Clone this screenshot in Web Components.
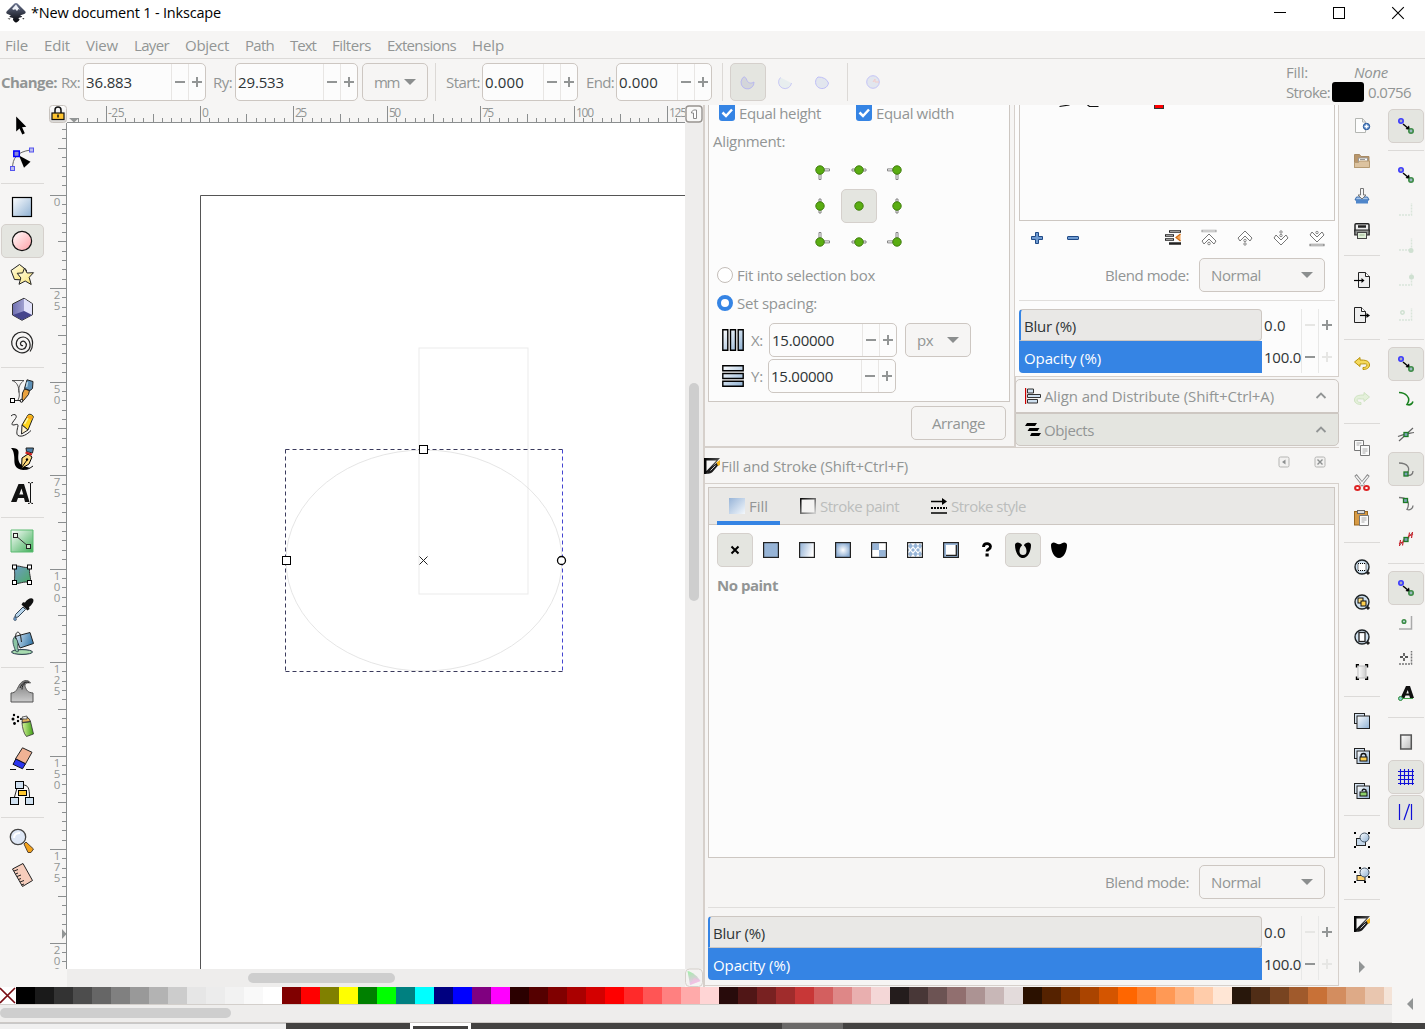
<!DOCTYPE html>
<html lang="en">
<head>
<meta charset="utf-8">
<title>*New document 1 - Inkscape</title>
<style>
html,body{margin:0;height:100%;overflow:hidden}
body{width:1425px;height:1029px;background:#f6f5f4;font:15px/20px "Open Sans","Noto Sans",sans-serif;color:#929595}
</style>
</head>
<body>
<ink-app></ink-app>
<script>
const FONT = '"Open Sans","Noto Sans",sans-serif';
const lg = (id, a, b, x2 = 1, y2 = 1) => `<linearGradient id="${id}" x1="0" y1="0" x2="${x2}" y2="${y2}"><stop offset="0" stop-color="${a}"/><stop offset="1" stop-color="${b}"/></linearGradient>`;
const BLUE = lg('g', '#fdfeff', '#8fb1d3');
const snapPair = '<circle cx="3" cy="3" r="2.2" fill="#aab" stroke="#3a3aff" stroke-width="1.6"/><path d="M5 6l6 5" stroke="#000" stroke-width="1.4"/><path d="M12 12l-4.500-1 3.500-3.500z" fill="#000"/><circle cx="13" cy="13" r="2.200" fill="#9bb7c0" stroke="#3d8b46" stroke-width="1.600"/>';
const node = (x, y) => `<rect x="${x - 2}" y="${y - 2}" width="4" height="4" fill="#7aa0b8" stroke="#1d7a26" stroke-width="1.300"/>`;
const corner = '<path d="M1 13h12.500V1" fill="none" stroke="#d9e5da" stroke-width="1.500" stroke-dasharray="2 1"/>';
const lens = '<path d="M12 12l3 3" stroke="#222" stroke-width="3"/><circle cx="8" cy="8" r="7" fill="#cfe0ee" stroke="#1c2124" stroke-width="1.400"/>';
const sheets = '<rect x=".5" y=".5" width="10" height="10" fill="#d6e4f2" stroke="#222"/><rect x="3" y="3" width="12.500" height="12.500" fill="url(#g)" stroke="#222"/>';
const hd = (x, y) => `<rect x="${x}" y="${y}" width="2" height="2" fill="#000"/>`;
const dot = '<circle cx="12" cy="12" r="4.200" fill="#5aad12" stroke="#3f7d0c"/>';
const arm = { r:'<path d="M16 10.900h5.500v2H16z"/>', l:'<path d="M2.500 10.900H8v2H2.500z"/>', b:'<path d="M11 16h2v5.500h-2z"/>', t:'<path d="M11 2.500h2V8h-2z"/>',
  rs:'<path d="M16 11h3v2h-3z"/>', ls:'<path d="M5 11h3v2H5z"/>', bs:'<path d="M11 16h2v3h-2z"/>', ts:'<path d="M11 5h2v3h-2z"/>' };
const arms = s => `<g fill="#fff" stroke="#777" stroke-width=".9">${s.split(' ').map(k => arm[k] || '').join('')}</g>${dot}`;
const box = (inner, fill) => `<rect x=".6" y=".6" width="14.800" height="14.800" fill="${fill}"/>${inner}<rect x=".6" y=".6" width="14.800" height="14.800" fill="none" stroke="#222" stroke-width="1.200"/>`;

const ICONS = {
 logo:[20,`${lg('g','#6b7490','#05060a',0,1)}<path d="M10 0c1 0 2 .8 3 2l6 6c1.500 1.600.4 2.800-1.500 3.200l-3 1c-1 .5 2 .8 1.500 1.600-.7.9-3.200.5-3.500 1.400s1.600.7 1 1.600c-.8 1.300-2.200 2.700-3.500 2.700s-2.300-1.300-3-2.400c-.5-1 .8-1.600 0-2.200-1-.6-3-.2-3.500-1.200-.3-.8 2-.8 1-1.500l-3-1.200C.2 10.700-.3 9.500 1 8l6-6c1-1.200 2-2 3-2z" fill="url(#g)"/><path d="M10 1.500L6 6l2 1 1-1 2 2 1.500-2 1.500 1z" fill="#eef1f8"/><path d="M16.500 15l2 .6-1.500.8zM1.500 15.600h3l-1 1z" fill="#000"/>`],
 pointer:[24,`<path d="M6.200 3.500v15l3.300-3.100 2.800 6 2.500-1.100-2.700-6 4.200-.5z" fill="#000"/>`],
 node:[24,`<path d="M2.500 21.500C2.500 11 7 5 20.500 3" fill="none" stroke="#666"/><path d="M9 8.500l11.500 6.300-6.500 6z" fill="#000"/><rect x="3.800" y="4" width="5.500" height="5.500" fill="#8888d8" stroke="#00f" stroke-width="1.500"/><rect x="19.500" y="1" width="4" height="4" fill="#bbe" stroke="#5555ee"/><rect x=".5" y="19.500" width="4" height="4" fill="#bbe" stroke="#5555ee"/>`],
 rect:[24,`${BLUE}<rect x="2.500" y="2.500" width="19" height="19" fill="url(#g)" stroke="#000" stroke-width="1.200"/>`],
 ellipse:[24,`${lg('g','#fff','#ff9fa6')}<circle cx="12" cy="12" r="9.600" fill="url(#g)" stroke="#111" stroke-width="1.200"/>`],
 star:[24,`${lg('g','#fffef0','#fbe36a')}<path d="M1 7.500L9.500 1.500l7 5.500-3 10-9-.5z" fill="url(#g)" stroke="#222"/><path d="M14.500 5l2.600 5 6.400-.3-4.300 4.600 2 7.200-6-3.500-6.200 3.300 1.800-6.400-3.600-4.600 5.500-.4z" fill="url(#g)" stroke="#222"/>`],
 cube:[24,`${lg('g','#6f6fb0','#c4c4ea',1,0)}<path d="M2.500 7L14 1.200l8.500 5.500v11L12 23.300 2.500 18z" fill="url(#g)" stroke="#333"/><path d="M14 1.500l8 5.500v11L14 14z" fill="#e2e2fb"/><path d="M14 14l8 4-10 5-9-5z" fill="#45458d"/>`],
 spiral:[24,`<path d="M13 14.500c-2 .8-3.500-2-1.800-3.500 2.600-2 5.800.5 5 4-.9 3.600-5.600 4.500-8.200 1.800C4.900 13.600 6.200 8.200 10.500 6.500c5-1.800 9.800 2 9.600 8.500C19.800 20 14 23 9.500 21.500 4.500 20 1.200 15.500 1.700 10.500 2.200 5 6.600 1 12 1c6 0 10.500 4.500 10.600 11 0 4-1 6.500-2.500 8.500" fill="none" stroke="#222" stroke-width="1.200"/>`],
 pen:[24,`<path d="M2 1.500h12C10 4 8 9 9 13c.5 3 .5 5-1 8M2 1.500c5 1.500 7 6 7 12" fill="none" stroke="#444" stroke-width=".9"/><path d="M3 21.500h8.500" stroke="#333"/><path d="M14.500 10l5 1.500-1 4-5 6-1.500-.5.5-7z" fill="#e9a23f" stroke="#222"/><path d="M17 .8l6 1.700-.5 7-2.500 2-5.500-2z" fill="#5c8fb5" stroke="#222"/><path d="M17.500 3l-1 5" stroke="#b9d8ec" stroke-width="1.500"/><rect x=".5" y="19.500" width="4" height="4" fill="#fff" stroke="#000"/><circle cx="11.500" cy="21.800" r="1.400" fill="#fff" stroke="#000"/>`],
 pencil:[24,`<path d="M1 3c3-3 7-1 4.500 2.500C3 9 .5 11.500 3 12c3 0 5-2 5 1-1 4-2 8 0 9.500 4 2 9-1 13-5" fill="none" stroke="#222"/><path d="M12 12l6-10c1-1.500 5-.5 5.300 2L18 17z" fill="#ffd51c" stroke="#222"/><path d="M12 12l6 5-6.500 4z" fill="#fff3cf" stroke="#222"/><path d="M14.500 11l4-7" stroke="#fff6b0" stroke-width="1.500"/><path d="M18 2.500q4-.5 5 2l-1.500 2.500-5-2.500z" fill="#f7a81b"/>`],
 calli:[24,`<path d="M1 1c5 0 8 1 7.500 5C8 11 8 15 11 17.500c3 2 6 2.500 9 3.500-4 2.500-9 2.500-12 .5C3 18.500 5 13 4 8 3.500 4.500 3 3 1 1z" fill="#000"/><path d="M14 22c4 1 6-1 9-3" fill="none" stroke="#111"/><path d="M12 11l6-4 4 3-3 7-7.500 4.500z" fill="#ffdc80" stroke="#000"/><path d="M16 1h7.500l-1 5-6-1.500z" fill="#4d7fa6" stroke="#222"/><path d="M15.500 5.500l6.500 2" stroke="#d02020" stroke-width="2"/><path d="M12 20l5-7" stroke="#000"/><circle cx="17" cy="12.500" r="1.200"/>`],
 text:[24,`<path d="M1 21L8.500 3h5.500l5.500 18h-4.500l-1-4H8l-1.500 4zM9.300 13.500h4L11.500 7.500z" fill="#111"/><path d="M18 1.500q2 0 2.500 1 .5-1 2.500-1M20.500 2.500v19M18 22.500q2 0 2.500-1 .5 1 2.500 1" fill="none" stroke="#111"/>`],
 gradient:[24,`${lg('g','#ffffff','#3fae58')}<rect x="1" y="1" width="22" height="22" fill="url(#g)"/><path d="M1 1h22v22H1z" fill="none" stroke="#5bbb70"/><path d="M5.500 6.500l13 11" stroke="#333"/><rect x="3.500" y="4.500" width="4" height="4" fill="#e9f3e8" stroke="#222"/><rect x="16.500" y="15.500" width="4" height="4" fill="#cfe8cd" stroke="#222"/>`],
 mesh:[24,`${lg('g','#6f9cc8','#4dab63')}<path d="M4 4c5-3 9 2 16 0-2 6 2 11 0 16-6-3-11 2-16 0 1-6 1-10 0-16z" fill="url(#g)" stroke="#333"/><g fill="#fff" stroke="#000"><rect x="2.500" y="2" width="4" height="4"/><rect x="17.500" y="2" width="4" height="4"/><rect x="2.500" y="17.500" width="4" height="4"/><rect x="17.500" y="17.500" width="4" height="4"/></g>`],
 dropper:[24,`<path d="M13 10l2.500 2.500L8 20l-3 .5.500-3z" fill="#b7d4ea" stroke="#345"/><path d="M11.500 7.500l6 6 2-1.500-.5-2c3-2 5.500-6 4-8s-6 0-8 3.500l-2-.2z" fill="#111"/><path d="M5 19.500c-2 2-1.500 4 .2 4s1.500-2-.2-4z" fill="#6f9fd0" stroke="#345" stroke-width=".7"/>`],
 bucket:[24,`${lg('g','#dcebf7','#3f7fae',1,.3)}<ellipse cx="12" cy="21" rx="10.500" ry="2.400" fill="#a8dcb0" stroke="#234"/><path d="M5 5.500L20 1.500l3.500 11L10 17z" fill="url(#g)" stroke="#222"/><path d="M5 5.500C1.500 9 3 13 5.500 20c1 1 3 1 3 0-1.500-4 0-6-1-10z" fill="#8cc5a4" stroke="#234" stroke-width=".8"/><path d="M6 8C4.500 2 8-1 10 3c1 3 1 5 1.500 8" fill="none" stroke="#222"/>`],
 tweak:[24,`${lg('g','#777','#ccc',0,1)}<path d="M1 14c5 0 6-4 8-7.500C12 1 18 0 20.500 4 16 3 14 5.500 15.500 8.500c1 2.500 2 5 7.500 5.500v9H1z" fill="url(#g)" stroke="#555"/><path d="M10 9c2-5 5-6.500 9-5.500M12 10.500c0-3 1-5 3-6" fill="none" stroke="#222"/>`],
 spray:[24,`${lg('g','#d7f59b','#3f9e14',1,0)}<path d="M12 10l8.500-1.500L23.500 21l-7 2.500c-3-3-4-9-4.500-13.500z" fill="url(#g)" stroke="#333" stroke-width=".8"/><path d="M12 9.500c0-6 6-8 8.500-1z" fill="#e3b25d" stroke="#333"/><path d="M12 4l5-1v3h-4z" fill="#eee" stroke="#444" stroke-width=".8"/><g fill="#000"><circle cx="4" cy="2" r="1.200"/><circle cx="8" cy="4" r="1.200"/><circle cx="3" cy="6" r="1.500"/><circle cx="8" cy="8" r="1.200"/><circle cx="4.500" cy="10.500" r="1.400"/><circle cx="11" cy="6" r="1"/></g>`],
 eraser:[24,`<path d="M12.500 .8l9.500 4.500-6.500 11.500-10-5z" fill="#f0b294" stroke="#222"/><path d="M5.800 12l9.700 4.800-3 5-9.500-4.500z" fill="#2b35ee" stroke="#112"/><path d="M0 22.500h6M16 22.500h8" stroke="#111" stroke-width="1.200"/>`],
 connector:[24,`<path d="M7 7L4.500 16M13 4c5 0 6.500 3 6.500 12" fill="none" stroke="#222"/><g fill="#cfe0f0" stroke="#000"><rect x="5.500" y=".5" width="8" height="7"/><rect x=".5" y="16.500" width="8" height="7"/><rect x="15.500" y="16.500" width="8" height="7"/></g><rect x="8.500" y="9.500" width="8" height="5" fill="#ffc831" stroke="#000"/>`],
 zoom:[24,`<path d="M14 15l2-2 7.500 7-2.500 3.500-3 0z" fill="#f3a21b" stroke="#543"/><circle cx="8" cy="8" r="7.700" fill="#dfe8f6" stroke="#444" stroke-width="1.300"/><path d="M4 9c0-4 3-5 6-5" stroke="#fff" stroke-width="2" fill="none"/>`],
 measure:[24,`<path d="M2.500 6L13 .5l9.500 17L12.500 23.500z" fill="#f6cdbc" stroke="#222"/><path d="M4 8l4-1.500M5.500 11l2.500-1M7 13.500l4-1.500M8.500 16.500L11 15.500M10 19l4-1.500M11.500 22l2.500-1" stroke="#222"/>`],
 arc1:[16,`<path d="M2 5a6.500 6.500 0 1 0 12 3c-3 2-6 1-7-1.500C6 4 5 2.500 4 3c-1 .3-1.500 1-2 2z" fill="#d3d5da" stroke="#b9b9f0"/>`],
 arc2:[16,`<path d="M3.500 3.500a6.500 6.500 0 1 0 11 5.500" fill="#e8eeef" stroke="#c9c9f5"/>`],
 arc3:[16,`<path d="M4 3a6.500 6.500 0 1 0 10.500 6Q12 3 4 3z" fill="#e2e6ee" stroke="#bfbff7"/>`],
 arc4:[16,`<circle cx="8" cy="8" r="6.300" fill="#e2e6ee" stroke="#c4c4f7"/><path d="M8 8l2-3v3h4" stroke="#f4cbc8" fill="none"/>`],
 lock:[18,`${lg('g','#fff','#d9d7d4',0,1)}<rect x=".5" y=".5" width="17" height="17" rx="3" fill="url(#g)" stroke="#c8c3be"/><path d="M6 8V5a3 3 0 0 1 6 0v3" fill="none" stroke="#111" stroke-width="1.500"/><rect x="3" y="8" width="12" height="6.500" fill="#ffc531" stroke="#111" stroke-width="1.200"/><path d="M9 9.500v3" stroke="#111" stroke-width="1.500"/>`],
 dup:[18,`<rect x="1" y="1" width="16" height="16" rx="3" fill="#f8f8f7" stroke="#97938f" stroke-width="1.400"/><path d="M6.500 7l2-2h3v8.500h-3V8h-2z" fill="#fff" stroke="#888"/>`],
 cms:[18,`<rect x=".5" y="0" width="17" height="17.500" rx="4" fill="#f4f3f2" stroke="#d5d0cb"/>${lg('g','#a0f0a8','#f2c0ee',.3,1)}<path d="M2.500 2C8 3 13 8 15.500 12L5 16z" fill="url(#g)"/><path d="M9 9l6.500 3L5 16z" fill="#f3bfe0" opacity=".6"/>`],
 new:[16,`<path d="M1.500.5h7L11.500 4v10.500h-10z" fill="#fdfdfd" stroke="#b4b6b2"/><path d="M8.500.5V4h3" fill="none" stroke="#b4b6b2"/><circle cx="12.500" cy="8.500" r="3.200" fill="#5d8bc8" stroke="#26579b"/><path d="M12.500 6.500v4M10.500 8.500h4" stroke="#fff" stroke-width="1.400"/>`],
 open:[16,`<path d="M.5 1.500h5l1.500 2h8v11H.5z" fill="#b9966b" stroke="#a98b64"/><path d="M4.500 5h9v5h-9z" fill="#fff" stroke="#999"/><path d="M.5 9.500h4l1-1.500h10v6.500H.5z" fill="#dcc3a0" stroke="#b59a72"/><path d="M6 6.500h5" stroke="#999"/>`],
 save:[16,`<path d="M2.500 9h11l1.500 3H1z" fill="#a8c6ea" stroke="#3568ab"/><path d="M2 11.500h12v4H2z" fill="#4f86ca"/><path d="M6.500.5h3V7h2.500L8 11 4 7h2.500z" fill="#f4f4f4" stroke="#777"/>`],
 print:[16,`<rect x="1" y=".8" width="14" height="8" rx="1" fill="#eee" stroke="#222" stroke-width="1.500"/><path d="M4 3.500h8" stroke="#222" stroke-width="2.500"/><path d="M.8 7h14.400v5H.8z" fill="#8e918f" stroke="#222" stroke-width="1.200"/><rect x="3.500" y="9.500" width="9" height="6" fill="#e0efd9" stroke="#444"/><path d="M5.500 12h5" stroke="#9ab58e"/>`],
 import:[16,`<path d="M4.500.5h7l4 4v11h-11z" fill="#eee" stroke="#222"/><path d="M11.500.5v4h4" fill="#fff" stroke="#222"/><path d="M0 8.500h8" stroke="#000" stroke-width="1.200"/><path d="M7.500 6l3 2.500-3 2.500z"/>`],
 export:[16,`<path d="M.5.500h7l4 4v11H.5z" fill="#eee" stroke="#222"/><path d="M7.500.5v4h4" fill="#fff" stroke="#222"/><path d="M6 8.500h7" stroke="#000" stroke-width="1.200"/><path d="M12.500 6l3.500 2.500-3.500 2.500z"/>`],
 undo:[16,`<path d="M.5 6L6 1.500V4c5 0 9.500.5 9.500 5 0 3-3 4.500-6.500 4.500v-2c2 0 4-.7 4-2.500S10 8 6 8v2.500z" fill="#f5d95b" stroke="#b89309"/>`],
 redo:[16,`<path d="M15.500 6L10 1.500V4C5 4 .5 4.500.5 9c0 3 3 4.500 6.500 4.500v-2c-2 0-4-.7-4-2.500S6 8 10 8v2.500z" fill="#e4f0da" stroke="#cfe3c2"/>`],
 copy:[16,`<g fill="#fbfbfb" stroke="#777"><path d="M.5.500h9v10h-9z"/><path d="M6.500 5.500h9v10h-9z"/></g><path d="M2.500 3h5M2.500 5h3M8.500 9h5M8.500 11h5M8.500 13h3" stroke="#aaa"/>`],
 cut:[16,`<path d="M1.500 0l8 10.500M14.500 0L6.500 10.500" stroke="#888" stroke-width="3"/><path d="M2 1l7.500 9M14 1L6.500 10" stroke="#f4f4f4" stroke-width="1.400"/><ellipse cx="3.500" cy="13" rx="2.400" ry="1.900" fill="#fff" stroke="#d22" stroke-width="2"/><ellipse cx="12.500" cy="13" rx="2.400" ry="1.900" fill="#fff" stroke="#d22" stroke-width="2"/>`],
 paste:[16,`<rect x=".5" y="1.500" width="13" height="13.500" fill="#d79a44" stroke="#98661f"/><rect x="3.500" y=".5" width="7" height="3" fill="#ddd" stroke="#666"/><path d="M5.500 5.500h9v10h-9z" fill="#fafafa" stroke="#777"/><path d="M7.500 8h5M7.500 10h5M7.500 12h3" stroke="#aaa"/>`],
 zsel:[16,lens+`<rect x="4" y="4.500" width="8" height="7" fill="#fff" stroke="#000" stroke-dasharray="1 1"/>`],
 zdraw:[16,lens+`<rect x="4" y="4" width="5" height="5" fill="#ffe08a" stroke="#111"/><rect x="7" y="7" width="5" height="5" fill="#ffd04f" stroke="#111"/>`],
 zpage:[16,lens+`<rect x="5" y="3.500" width="6" height="9" fill="#fff" stroke="#222" stroke-width="1.300"/>`],
 zwidth:[16,`${lg('g','#fff','#ccc',1,0)}<rect x="4" y="2" width="8" height="12" fill="url(#g)" stroke="#bbb"/><path d="M2 .8h3M2 15.200h3M11 .8h3M11 15.200h3M2.500 0v3.500M13.500 0v3.500M2.500 16v-3.500M13.500 16v-3.500" stroke="#000" stroke-width="1.400"/>`],
 clone:[16,BLUE+sheets],
 clonelock:[16,BLUE+sheets+`<path d="M7 9V8a2 2 0 0 1 5 0v1" fill="none" stroke="#111" stroke-width="1.300"/><rect x="6" y="9" width="7" height="4" fill="#ffd04f" stroke="#111"/>`],
 cloneunlock:[16,BLUE+sheets+`<path d="M8 8q1-3 4-1v2" fill="none" stroke="#111" stroke-width="1.300"/><rect x="6" y="9" width="7" height="4" fill="#8ccf6b" stroke="#111"/>`],
 group:[16,`${BLUE}<rect x="2.500" y="6.500" width="9" height="7" fill="#c5d8ea" stroke="#222"/><circle cx="10.500" cy="5.500" r="4.500" fill="url(#g)" stroke="#456"/>${hd(0,0)+hd(14,0)+hd(0,14)+hd(14,14)}`],
 ungroup:[16,`${BLUE}<rect x="3" y="8.500" width="8" height="5" fill="#ffd16b" stroke="#222"/><circle cx="10.500" cy="5.500" r="4.500" fill="url(#g)" stroke="#456"/>${hd(5,0)+hd(14,0)+hd(0,4)+hd(0,14)+hd(14,9)+hd(10,14)}`],
 fillstroke:[16,`${lg('g','#000','#555',1,0)}<path d="M0 0h16L2 16H0z" fill="url(#g)"/><path d="M2.500 2.500h10L2.500 13z" fill="#f6f5f4"/><path d="M14.500 3.500v3.500L8.500 14c-2.500 2-5.500 2-8 1.700 3-.7 3.500-2.500 4.500-4.700z" fill="#1d1d1d"/><path d="M12.500 4.500L16 2v5l-2 1z" fill="#f6b414"/><path d="M6.500 12.500l5-5" stroke="#ccc"/>`],
 snap:[16,snapPair],
 sn1:[16,corner], sn2:[16,corner+'<circle cx="13" cy="13.500" r="2.500" fill="#cfe0d1"/>'], sn3:[16,corner+'<circle cx="13.500" cy="5" r="2.500" fill="#cfe0d1"/>'], sn4:[16,corner+'<circle cx="4.500" cy="5.500" r="1.700" fill="none" stroke="#cfe0d1" stroke-width="1.500"/>'],
 sp1:[16,`<path d="M1 1.500c6 0 13 5 8 12 3 1 5 0 6-3" fill="none" stroke="#18801e" stroke-width="1.500"/>`],
 sp2:[16,`<path d="M1 15l14-13M0 10.500c6-3 10-3 16-4" stroke="#666" fill="none" stroke-width="1.200"/>${node(8,8.5)}`],
 sp3:[16,`<path d="M1 2c8 0 13 5 7 12 4 1 7 0 7-4" fill="none" stroke="#777" stroke-width="1.300"/>${node(8,13)}`],
 sp4:[16,`<path d="M1 1.500c7 0 12 4 8 12 3 1 6-1 6-4" fill="none" stroke="#777" stroke-width="1.300"/>${node(7.5,4.5)}`],
 sp5:[16,`<path d="M1 15L15 1" stroke="#888"/><path d="M2.500 9l-1 6M5.500 8.500l-1 6M1 12.500l5-2M11.500 1.500l-1 6M14.500 1l-1 6M10 5.500l5-2.500" stroke="#c8232c" stroke-width="1.200"/>${node(8,8.5)}`],
 so1:[16,`<path d="M1 14h12.500V1" fill="none" stroke="#aaa" stroke-width="1.500"/><circle cx="6" cy="6.500" r="1.800" fill="#bdd" stroke="#3d8b46" stroke-width="1.500"/>`],
 so2:[16,`<path d="M1 14h12.500V1" fill="none" stroke="#777" stroke-width="1.500" stroke-dasharray="2 1"/><path d="M2 7h3M7 7h3M6 3v3M6 8v3" stroke="#222" stroke-width="1.300"/>`],
 so3:[16,`<path d="M2.500 13L8 1h4l4 12h-4l-.7-2.500H7.500L6.500 13zM8.300 8.500h2.500L9.800 5z" fill="#111"/><path d="M3 13.500h12" stroke="#3fa047"/><circle cx="2.500" cy="13.500" r="2" fill="#8cc" stroke="#2d8b36"/>`],
 page:[16,`${lg('g','#fff','#bbb')}<rect x="2.700" y="1" width="10.600" height="14" fill="url(#g)" stroke="#555" stroke-width="1.500"/>`],
 grid:[16,`<path d="M0 2.500h16M0 6.500h16M0 10.500h16M2.500 0v16M6.500 0v16M10.500 0v16M14.500 0v16M0 14.500h16" stroke="#1010d8" stroke-width="1.100"/>`],
 guides:[16,`<path d="M1.500 0v16M13.500 0v16M11.500 0L6 16" stroke="#1010d8" stroke-width="1.200"/>`],
 sqx:[22,`${BLUE}<g fill="url(#g)" stroke="#000" stroke-width="1.400"><path d="M.8.800h5v20.400h-5zM8.500.8h5v20.400h-5zM16.200.800h5v20.400h-5z"/></g>`],
 sqy:[22,`${BLUE}<g fill="url(#g)" stroke="#000" stroke-width="1.400"><path d="M.8.800v5h20.400v-5zM.8 8.500v5h20.400v-5zM.8 16.200v5h20.400v-5z"/></g>`],
 plus:[16,`<path d="M6.500 2.500h3v4h4v3h-4v4h-3v-4h-4v-3h4z" fill="#6f9bd1" stroke="#204a87"/>`],
 minus:[16,`<rect x="2.500" y="6.500" width="11" height="3" rx=".5" fill="#6f9bd1" stroke="#204a87"/>`],
 layers:[16,`<path d="M4 1.500h12M0 5.500h9M0 9.500h9M4 13.500h12" stroke="#222" stroke-width="2.500"/><path d="M5 1.500h10M1 5.500h7M1 9.500h7" stroke="#bbb" stroke-width=".8"/><path d="M15.500 4L11 7.500l4.500 3.500" fill="#f6a65a" stroke="#ce6a12" stroke-width="1.200"/>`],
 top:[16,`<path d="M.5 1h15" stroke="#999" stroke-width="2.400"/><path d="M1.500 1h13" stroke="#fff"/><path d="M1 11l7-7 7 7-2 3-5-5-5 5z" fill="#fff" stroke="#777"/><circle cx="8" cy="13.500" r="1.300" fill="none" stroke="#888"/>`],
 up:[16,`<path d="M1 8l7-7 7 7-2 3-5-5-5 5z" fill="#fff" stroke="#777"/><circle cx="8" cy="10.500" r="1.200" fill="none" stroke="#888"/><circle cx="8" cy="14" r="1.200" fill="none" stroke="#888"/>`],
 down:[16,`<path d="M1 8l7 7 7-7-2-3-5 5-5-5z" fill="#fff" stroke="#777"/><circle cx="8" cy="2" r="1.200" fill="none" stroke="#888"/><circle cx="8" cy="5.500" r="1.200" fill="none" stroke="#888"/>`],
 bottom:[16,`<path d="M.5 15h15" stroke="#777" stroke-width="2.400"/><path d="M1.500 15h13" stroke="#fff"/><path d="M1 5l7 7 7-7-2-3-5 5-5-5z" fill="#fff" stroke="#777"/><circle cx="8" cy="2.500" r="1.200" fill="none" stroke="#888"/>`],
 align:[16,`<path d="M.6 0v16" stroke="#c00" stroke-width="1.200"/><g fill="#cfe0ef" stroke="#333"><path d="M2.500 1h6v4h-6zM2.500 6.500h13v3h-13zM2.500 11.500h10V15h-10z"/></g>`],
 objects:[16,`<path d="M2 1h10l-2 3H0zM4.500 6h10l-2 3h-10zM6.500 11H16l-2 3H5z" fill="#000"/>`],
 tfill:[16,`${lg('g','#97b4d8','#f4f8fc')}<path d="M0 0h16v16H0z" fill="url(#g)"/>`],
 tstroke:[16,`${lg('g','#000','#ccc')}<rect x=".8" y=".8" width="14.400" height="14.400" fill="#f4f3f2" stroke="url(#g)" stroke-width="1.500"/>`],
 tstyle:[16,`<path d="M0 3.500h13M0 15h16" stroke="#000" stroke-width="1.500"/><path d="M11 0l5 3.500L11 7z"/><path d="M0 10h16" stroke="#000" stroke-width="1.800" stroke-dasharray="2 1"/>`],
 px:[16,`<path d="M4.500 4.500l7 7M11.500 4.500l-7 7" stroke="#000" stroke-width="2"/>`],
 pflat:[16,box('','#97b4d6')],
 plin:[16,lg('g','#8fafd4','#fff',1,.3)+box('','url(#g)')],
 prad:[16,'<radialGradient id="g"><stop offset="0" stop-color="#fff"/><stop offset="1" stop-color="#8fafd4"/></radialGradient>'+box('','url(#g)')],
 pmesh:[16,box('<path d="M1.200 1.200H8V8H1.200zM8 8h6.800v6.800H8z" fill="#97b4d6"/>','#fff')],
 ppat:[16,box('<path d="M3.500 1l2.500 3-2.500 3L1 4zM8.500 1L11 4 8.500 7 6 4zM13 1l2 3-2 3-2-3zM3.500 9L6 12l-2.500 3L1 12zM8.500 9l2.500 3-2.500 3L6 12zM13 9l2 3-2 3-2-3zM1 6.500L2.500 8 1 9.500zM6 6l2 2-2 2-2-2zM11 6l2 2-2 2-2-2z" fill="#97b4d6"/>','#fff')],
 pswatch:[16,box('<rect x="3" y="3" width="10" height="10" fill="#fff"/><path d="M3 13.300h10.300V3" fill="none" stroke="#222" stroke-width="1.300"/>','#97b4d6')],
 pq:[16,`<path d="M4.500 5C4.500.5 11.500 .5 11.500 4.500c0 3-3.500 2.500-3.500 5" fill="none" stroke="#000" stroke-width="2.800"/><rect x="6.500" y="11.500" width="3.200" height="3" fill="#000"/>`],
 peo:[16,`<path d="M0 3C0 .5 3-.3 5 1.300c2 1.200 4 1.200 6 0C13-.3 16 .5 16 3c0 6-3 13-8 13S0 9 0 3z" fill="#000"/><path d="M7 3.500C5 5 4.500 7 4.500 9.500 4.500 12 6 13 8 13s3.500-1 3.500-3.500C11.500 7 11 5 9 3.500L10 1H6z" fill="#e4e5e0"/>`],
 pnz:[16,`<path d="M0 3C0 .5 3-.3 5 1.300c2 1.200 4 1.200 6 0C13-.3 16 .5 16 3c0 6-3 13-8 13S0 9 0 3z" fill="#000"/>`],
 chev:[12,`<path d="M1.500 8L6 3.500 10.500 8" fill="none" stroke="#929595" stroke-width="1.800"/>`],
 tri:[12,`<path d="M0 3h12L6 9z" fill="#8b8e8e"/>`],
 triR:[12,`<path d="M3 0v12l6-6z" fill="#929595"/>`], triL:[12,`<path d="M9 0v12L3 6z" fill="#929595"/>`],
 m:[12,`<path d="M1 6h10" stroke="currentColor" stroke-width="2"/>`], p:[12,`<path d="M1 6h10M6 1v10" stroke="currentColor" stroke-width="2"/>`],
 check:[16,`<path d="M0 0h16v13a3 3 0 0 1-3 3H3a3 3 0 0 1-3-3z" fill="#3584e4"/><path d="M3.500 7.500l3.500 3.500 6-6.500" fill="none" stroke="#fff" stroke-width="2.500"/>`],
 radio:[16,`<circle cx="8" cy="8" r="7.500" fill="#fff" stroke="#c4beb9"/>`],
 radioOn:[16,`<circle cx="8" cy="8" r="6" fill="#fff" stroke="#3584e4" stroke-width="4"/>`],
 iconify:[12,`<rect x="1" y="1" width="10" height="10" rx="1.500" fill="#f2f1f0" stroke="#b5b5b3"/><path d="M7.500 3.500v5L4 6z" fill="#8d9090"/>`],
 close:[12,`<rect x="1" y="1" width="10" height="10" rx="1.500" fill="#f2f1f0" stroke="#b5b5b3"/><path d="M3.500 3.500l5 5M8.500 3.500l-5 5" stroke="#8d9090" stroke-width="1.400"/>`],
 wmin:[12,`<path d="M0 5.500h12" stroke="#000"/>`], wmax:[12,`<rect x=".5" y=".5" width="11" height="11" fill="none" stroke="#000"/>`], wclose:[12,`<path d="M.2.200l11.600 11.600M11.800.200L.2 11.800" stroke="#000" stroke-width="1.100"/>`],
 nocolor:[16,`<rect width="16" height="17" fill="#fff"/><path d="M0 1l15 15M15 1L0 16" stroke="#7a0e14" stroke-width="1.600"/>`],
 tl:[24,arms('r b')], tc:[24,arms('rs ls')], tr:[24,arms('l b')], ml:[24,arms('ts bs')], mc:[24,arms('')], bl:[24,arms('r t')], br:[24,arms('l t')]
};

// Registers an element whose open shadow root holds the given style and markup.
function define(name, css, html) {
  customElements.define(name, class extends HTMLElement {
    constructor() { super(); this.attachShadow({ mode: 'open' }); }
    connectedCallback() {
      if (this.shadowRoot.firstChild) return;
      const a = (k, d = '') => this.getAttribute(k) ?? d;
      this.shadowRoot.innerHTML = `<style>:host{display:flex;box-sizing:border-box;flex:none}*{box-sizing:border-box}${typeof css === 'function' ? css(a) : css}</style>${typeof html === 'function' ? html(a) : html}`;
    }
  });
}

// Text run set to an exact advance width by even tracking.
const pen = document.createElement('canvas').getContext('2d');
customElements.define('ink-t', class extends HTMLElement {
  constructor() { super(); this.attachShadow({ mode: 'open' }); }
  connectedCallback() {
    if (this.shadowRoot.firstChild) return;
    const s = this.getAttribute('s') || 15, w = this.getAttribute('w'), f = this.getAttribute('f') || '';
    pen.font = `${f} ${s}px ${FONT}`;
    const txt = this.textContent, ls = w ? (w - pen.measureText(txt).width) / txt.length : 0;
    this.shadowRoot.innerHTML = `<style>:host{display:block;flex:none;white-space:nowrap;font:${f} ${s}px/20px ${FONT};letter-spacing:${ls.toFixed(3)}px;${w ? `width:${w}px` : ''}}</style><slot></slot>`;
  }
});
define('ink-icon', a => { const z = a('z', (ICONS[a('n')] || [16])[0]); return `:host{display:block;width:${z}px;height:${z}px}svg{display:block;overflow:visible}`; },
  a => { const [v, d] = ICONS[a('n')] || [16, '']; const z = a('z', v); return `<svg width="${z}" height="${z}" viewBox="0 0 ${v} ${v}" fill="#000">${d}</svg>`; });
define('ink-spin', a => `:host{width:${a('w')}px;height:${a('h', 38)}px;border:1px solid #cdc7c2;border-radius:5px;background:#fcfcfc;color:#2e3436;align-items:stretch}
 .v{flex:1;display:flex;align-items:center;padding-left:2px;min-width:0}.b{width:17px;border-left:1px solid #e8e6e4;display:flex;align-items:center;justify-content:center;color:#929595}`,
  a => `<div class="v"><ink-t w="${a('tw')}">${a('v')}</ink-t></div><div class="b"><ink-icon n="m"></ink-icon></div><div class="b"><ink-icon n="p"></ink-icon></div>`);
define('ink-drop', a => `:host{width:${a('w')}px;height:${a('h', 34)}px;border:1px solid #cdc7c2;border-radius:5px;background:#f6f5f4;align-items:center;justify-content:space-between;padding:0 11px}`,
  a => `<ink-t w="${a('tw')}">${a('v')}</ink-t><ink-icon n="tri"></ink-icon>`);
define('ink-btn', a => `:host{width:${a('w', 36)}px;height:${a('h', 34)}px;border:1px solid ${a('on') ? '#d5d0cc' : 'transparent'};border-radius:5px;background:${a('on') ? '#e4e5e0' : 'none'};align-items:center;justify-content:center}`, '<slot></slot>');

define('ink-titlebar', `:host{height:31px;background:#fff;color:#000;align-items:center;padding:0 21px 6px 6px}.g{flex:1}.c{display:flex;gap:47px}`,
 `<ink-icon n="logo"></ink-icon><ink-t w="190" s="14.500" style="margin-left:5px">*New document 1 - Inkscape</ink-t><div class="g"></div><div class="c"><ink-icon n="wmin"></ink-icon><ink-icon n="wmax"></ink-icon><ink-icon n="wclose"></ink-icon></div>`);
define('ink-menubar', `:host{height:28px;border-bottom:1px solid #dcdad8;padding:4px 0 0 5px;gap:16px}`,
 [['File',23],['Edit',26],['View',32],['Layer',35],['Object',44],['Path',29],['Text',26],['Filters',39],['Extensions',69],['Help',32]].map(([t,w]) => `<ink-t w="${w}">${t}</ink-t>`).join(''));
define('ink-toolbar', `:host{height:46px;align-items:center;padding:0 0 0 1px}.s{width:1px;height:38px;background:#dcd9d6;flex:none}.f{width:139px;display:flex;flex-direction:column;flex:none;margin-top:-1px}.r{display:flex;height:20px;align-items:center}`,
 `<ink-t w="56" f="bold">Change:</ink-t><ink-t w="19" style="margin:0 3px 0 4px">Rx:</ink-t><ink-spin w="123" v="36.883" tw="46"></ink-spin>
 <ink-t w="19" style="margin:0 3px 0 7px">Ry:</ink-t><ink-spin w="123" v="29.533" tw="46"></ink-spin><ink-drop w="66" h="38" v="mm" tw="25" style="margin-left:4px"></ink-drop>
 <div class="s" style="margin:0 10px 0 7px"></div><ink-t w="34">Start:</ink-t><ink-spin style="margin-left:2px" w="96" v="0.000" tw="39"></ink-spin>
 <ink-t w="28" style="margin:0 2px 0 8px">End:</ink-t><ink-spin w="96" v="0.000" tw="39"></ink-spin><div class="s" style="margin:0 7px 0 10px"></div>
 <ink-btn on="1" h="38"><ink-icon n="arc1"></ink-icon></ink-btn><ink-btn h="38" w="37"><ink-icon n="arc2"></ink-icon></ink-btn><ink-btn h="38" w="37"><ink-icon n="arc3"></ink-icon></ink-btn>
 <div class="s" style="margin:0 7px"></div><ink-btn h="38"><ink-icon n="arc4"></ink-icon></ink-btn><div style="flex:1"></div>
 <div class="f"><div class="r"><ink-t w="22">Fill:</ink-t><ink-t w="34" f="italic" style="margin-left:46px">None</ink-t></div><div class="r"><ink-t w="44">Stroke:</ink-t><div style="width:32px;height:20px;background:#000;border-radius:3px;margin:0 4px 0 2px"></div><ink-t w="43">0.0756</ink-t></div></div>`);

const strip = (list, tag) => list.split(' ').map(k => k === '|' ? '<div class="s"></div>' : `<div class="i"><ink-btn ${k[0] === '+' ? 'on="1"' : ''} ${tag}><ink-icon n="${k.replace('+', '')}"></ink-icon></ink-btn></div>`).join('');
define('ink-toolbox', `:host{width:49px;flex-direction:column;padding:3px 0 0 1px}.i{height:34px;width:43px;flex:none;display:flex;align-items:center}.i ink-icon{margin-right:1px}.s{height:14px;width:43px;flex:none;background:linear-gradient(#dcdad8,#dcdad8) 0 7px/100% 1px no-repeat}`,
 strip('pointer node | rect +ellipse star cube spiral | pen pencil calli text | gradient mesh dropper bucket | tweak spray eraser connector | zoom measure', 'w="43"'));
const narrow = `.i{height:35px;width:36px;flex:none;display:flex;align-items:center}.s{height:14px;width:36px;flex:none;background:linear-gradient(#dcdad8,#dcdad8) 0 6.500px/100% 1px no-repeat}`;
define('ink-commands', `:host{width:45px;flex-direction:column;padding:3.500px 0 0 5px}${narrow}`,
 strip('new open save print | import export | undo redo | copy cut paste | zsel zdraw zpage zwidth | clone clonelock cloneunlock | group ungroup | fillstroke', '') + '<ink-icon n="triR" style="margin:19px 0 0 12px"></ink-icon>');
define('ink-snapbar', `:host{width:41px;flex-direction:column;padding:3.500px 0 0 4px}${narrow}`,
 strip('+snap | snap sn1 sn2 sn3 sn4 | +snap sp1 sp2 +sp3 sp4 sp5 | +snap so1 so2 so3 | page +grid +guides', ''));

// Ruler ticks: 3.74 px per millimetre, a tick each 2.5 mm.
const ticks = (from, to, org, draw) => { let s = ''; for (let i = Math.ceil((from - org) / 9.35); org + i * 9.35 < to; i++) { const p = Math.floor(org + i * 9.35) - from + .5; s += draw(p, i % 10 === 0 ? 17 : i % 5 === 0 ? 9 : 5, i); } return s; };
define('ink-hruler', `:host{width:618px;height:18px;overflow:hidden}svg{display:block}text{font:12px ${FONT};fill:#929595}`,
 () => `<svg width="618" height="18">${ticks(67, 685, 200, (p, h, i) => i * 9.35 < -125 ? '' : `<path d="M${p} ${18 - h}V18" stroke="#8b8e8f"/>` + (h === 17 ? `<text x="${p + 1.5}" y="12" textLength="${String(i * 2.5).replace('-', '').length * 6 + (i < 0 ? 4.5 : 0)}">${i * 2.5}</text>` : ''))}<path d="M0 17.500h618" stroke="#8b8e8f"/><path d="M2 13h10l-5 4.500z" fill="#929595"/></svg>`);
define('ink-vruler', `:host{width:18px;height:846px;overflow:hidden}svg{display:block}text{font:11.500px ${FONT};fill:#929595;text-anchor:middle}`,
 () => `<svg width="18" height="846">${ticks(123, 969, 195, (p, h, i) => `<path d="M${18 - h} ${p}H18" stroke="#8b8e8f"/>` + (h === 17 ? String(i * 2.5).split('').map((c, k) => `<text x="8" y="${p + 10.5 + k * 11}">${c}</text>`).join('') : ''))}<path d="M17.500 0v846" stroke="#8b8e8f"/><path d="M13 806v10l4.500-5z" fill="#929595"/></svg>`);
define('ink-drawing', `:host{display:block;width:618px;height:846px;background:#fff}svg{display:block}`,
 `<svg width="618" height="846" viewBox="67 123 618 846" fill="none"><path d="M200.500 969V195.500H685" stroke="#555"/><rect x="419" y="348" width="109" height="246" stroke="#ebebeb"/><ellipse cx="424" cy="560.500" rx="138" ry="110.500" stroke="#dedede" stroke-width=".8"/>
 <path d="M285.500 449.500h277M285.500 671.500h277M285.500 449.500v222" stroke="#3a3a5c" stroke-dasharray="4 3"/><path d="M562.500 449.500v222" stroke="#4545d0" stroke-dasharray="4 3"/>
 <path d="M419.500 556.500l8 8M427.500 556.500l-8 8" stroke="#222"/><g fill="#fff" stroke="#000"><rect x="419.500" y="445.500" width="8" height="8"/><rect x="282.500" y="556.500" width="8" height="8"/><circle cx="561.500" cy="560.500" r="4" stroke-width="1.300"/></g></svg>`);
define('ink-canvas', `:host{display:grid;width:654px;grid-template:18px 846px 18px / 18px 618px 18px}.v,.h{background:#eeedec}.v{padding:260px 0 0 4px}.v div{width:10px;height:218px;border-radius:5px;background:#cecece}.h{padding:4px 0 0 181px}.h div{width:147px;height:10px;border-radius:5px;background:#cecece}`,
 `<ink-icon n="lock"></ink-icon><ink-hruler></ink-hruler><ink-icon n="dup"></ink-icon><ink-vruler></ink-vruler><ink-drawing></ink-drawing><div class="v"><div></div></div><span></span><div class="h"><div></div></div><ink-icon n="cms"></ink-icon>`);

define('ink-arrange', `:host{width:312px;height:343px;flex-direction:column;border:solid #d6d0cb;border-width:0 2px 2px 1px}.p{margin-left:3px;width:302px;height:297px;border:1px solid #cdc7c2;border-top:0;background:#fcfcfc;padding-left:4px;display:flex;flex-direction:column}.r{display:flex;align-items:center;flex:none}.g{display:grid;grid-template-columns:38.500px 38.500px 38.500px;grid-template-rows:36px 36px 36px;margin:1px 0 0 88px;place-items:center}.b{width:95px;height:34px;border:1px solid #cdc7c2;border-radius:5px;display:flex;align-items:center;justify-content:center;margin:4px 0 0 206px}`,
 `<div class="p"><div class="r" style="height:16px;padding-left:6px"><ink-icon n="check"></ink-icon><ink-t w="82" style="margin:0 35px 0 4px">Equal height</ink-t><ink-icon n="check"></ink-icon><ink-t w="78" style="margin:0 0 0 4px">Equal width</ink-t></div>
 <ink-t w="72" style="margin-top:10px">Alignment:</ink-t>
 <div class="g">${['tl','tc','tr','ml','mc','ml','bl','tc','br'].map((n, i) => `<ink-btn ${i === 4 ? 'on="1"' : ''}><ink-icon n="${n}"></ink-icon></ink-btn>`).join('')}</div>
 <div class="r" style="margin:5px 0 0 4px;height:20px"><ink-icon n="radio"></ink-icon><ink-t w="138" style="margin-left:4px">Fit into selection box</ink-t></div>
 <div class="r" style="margin:8px 0 0 4px;height:20px"><ink-icon n="radioOn"></ink-icon><ink-t w="80" style="margin-left:4px">Set spacing:</ink-t></div>
 <div class="r" style="margin:10px 0 0 9px"><ink-icon n="sqx"></ink-icon><ink-t w="12" style="margin:0 6px 0 7px">X:</ink-t><ink-spin w="128" h="34" v="15.00000" tw="62"></ink-spin><ink-drop w="66" v="px" tw="16" style="margin-left:8px"></ink-drop></div>
 <div class="r" style="margin:2px 0 0 9px"><ink-icon n="sqy"></ink-icon><ink-t w="12" style="margin:0 5px 0 7px">Y:</ink-t><ink-spin w="128" h="34" v="15.00000" tw="62"></ink-spin></div></div>
 <div class="b"><ink-t w="53">Arrange</ink-t></div>`);
define('ink-slider', a => `:host{height:32px;color:#2e3436;align-items:stretch}.bar{width:${a('w')}px;flex:none;padding:7px 0 0 5px;${a('full') ? 'background:#3584e4;color:#fff;border-radius:0 0 0 4px' : 'background:#e9e8e6;border:1px solid #cdc7c2;border-left:2px solid #3584e4;border-radius:4px 4px 4px 0;padding:6px 0 0 3px'}}.v{width:39px;padding:6px 0 0 2px;flex:none}.b{width:17px;flex:none;border-left:1px solid #e8e8e7;padding:10px 0 0 2px;color:#929595}.d{color:#e6e6e4}`,
 a => `<div class="bar"><ink-t w="${a('tw')}">${a('t')}</ink-t></div><div class="v"><ink-t w="${a('vw')}">${a('v')}</ink-t></div><div class="b ${a('full') ? '' : 'd'}"><ink-icon n="m"></ink-icon></div><div class="b ${a('full') ? 'd' : ''}"><ink-icon n="p"></ink-icon></div>`);
define('ink-blend', a => `:host{flex-direction:column;width:${a('full')}px}.r{display:flex;justify-content:flex-end;align-items:center;gap:10px;padding-right:10px}.s{height:1px;background:#e0dedc;margin:8px 0}`,
 a => `<div class="r"><ink-t w="84">Blend mode:</ink-t><ink-drop w="126" v="Normal" tw="50"></ink-drop></div><div class="s"></div><ink-slider w="${a('w')}" t="Blur (%)" tw="52" v="0.0" vw="22"></ink-slider><ink-slider w="${a('w')}" full="1" t="Opacity (%)" tw="77" v="100.0" vw="37"></ink-slider>`);
define('ink-objects', `:host{width:324px;height:343px;flex-direction:column;border-bottom:1px solid #d6d0cb}.p{height:272px;border:1px solid #d6d0cb;border-top:0;border-left:0;background:#fcfcfc;padding-left:4px}.tree{width:316px;height:116px;border:1px solid #cdc7c2;border-top:0;display:flex;align-items:flex-start;padding-left:39px}.tb{display:flex;height:34px;align-items:center;padding-left:0}.tab{height:33px;border:1px solid #cdc7c2;display:flex;align-items:center;padding:0 11px 0 9px;gap:3px;flex:none}.tab span{flex:1}`,
 `<div class="p"><div class="tree"><svg width="110" height="4"><path d="M.5 1.500l10-1.500M28.500 0l2 1.500h9" stroke="#111" stroke-width="1.200" fill="none"/><rect x="95.500" y="-2" width="9" height="5.500" fill="#f00" stroke="#333"/></svg></div>
 <div class="tb"><ink-btn><ink-icon n="plus"></ink-icon></ink-btn><ink-btn><ink-icon n="minus"></ink-icon></ink-btn><div style="width:64px"></div><ink-btn><ink-icon n="layers"></ink-icon></ink-btn><ink-btn><ink-icon n="top"></ink-icon></ink-btn><ink-btn><ink-icon n="up"></ink-icon></ink-btn><ink-btn><ink-icon n="down"></ink-icon></ink-btn><ink-btn><ink-icon n="bottom"></ink-icon></ink-btn></div>
 <ink-blend w="243" full="316" style="margin-top:3px"></ink-blend></div>
 <div class="tab" style="margin-top:2px;border-radius:5px 5px 0 0;height:34px"><ink-icon n="align"></ink-icon><ink-t w="230">Align and Distribute (Shift+Ctrl+A)</ink-t><span></span><ink-icon n="chev"></ink-icon></div>
 <div class="tab" style="background:#e4e5e0;border-radius:0 0 5px 5px"><ink-icon n="objects"></ink-icon><ink-t w="50">Objects</ink-t><span></span><ink-icon n="chev"></ink-icon></div>`);
define('ink-fillstroke', `:host{width:635px;height:539px;flex-direction:column;border-left:1px solid #d6d0cb}.h{display:flex;height:35px;align-items:center;margin-left:-1px;padding:1px 13px 0 0}.o{border:1px solid #d6d0cb;border-left-width:0;height:503px;padding:3px 3px 0}.p{height:371px;border:1px solid #cdc7c2;background:#fcfcfc}.t{display:flex;height:37px;background:#e9e8e6;border-bottom:1px solid #cdc7c2;padding-left:8px;color:#bbbdbc}.t div{display:flex;align-items:center;gap:4px}.t .a{width:63px;height:37px;padding-left:12px;border-bottom:4px solid #3584e4;color:#929595;padding-top:3px}.b{display:flex;padding:8px 0 0 8px}`,
 `<div class="h"><ink-icon n="fillstroke"></ink-icon><ink-t w="187" style="margin-left:1px">Fill and Stroke (Shift+Ctrl+F)</ink-t><div style="flex:1"></div><ink-icon n="iconify" style="margin:-9px 24px 0 0"></ink-icon><ink-icon n="close" style="margin-top:-9px"></ink-icon></div>
 <div class="o"><div class="p"><div class="t"><div class="a"><ink-icon n="tfill"></ink-icon><ink-t w="19">Fill</ink-t></div><div style="margin-left:20px"><ink-icon n="tstroke"></ink-icon><ink-t w="79">Stroke paint</ink-t></div><div style="margin-left:32px"><ink-icon n="tstyle"></ink-icon><ink-t w="75">Stroke style</ink-t></div></div>
 <div class="b">${['px','pflat','plin','prad','pmesh','ppat','pswatch','pq','peo','pnz'].map(n => `<ink-btn ${n === 'px' || n === 'peo' ? 'on="1"' : ''}><ink-icon n="${n}"></ink-icon></ink-btn>`).join('')}</div><ink-t w="61" f="bold" style="margin:8px 0 0 8px">No paint</ink-t></div>
 <ink-blend w="554" full="627" style="margin-top:7px"></ink-blend></div>`);
define('ink-docks', `:host{width:635px;flex-direction:column}.r{display:flex;height:343px}`, `<div class="r"><ink-arrange></ink-arrange><ink-objects style="margin-left:-1px"></ink-objects></div><ink-fillstroke></ink-fillstroke>`);

const PALETTE = '000000 1a1a1a 333333 4d4d4d 666666 808080 999999 b3b3b3 cccccc e6e6e6 ececec f2f2f2 f9f9f9 ffffff 800000 ff0000 808000 ffff00 008000 00ff00 008080 00ffff 000080 0000ff 800080 ff00ff 2b0000 550000 800000 aa0000 d40000 ff0000 ff2a2a ff5555 ff8080 ffaaaa ffd5d5 280b0b 501616 782121 a02c2c c83737 d35f5f de8787 e9afaf f4d7d7 241c1c 483737 6c5353 916f6f ac9393 c8b7b7 e3dbdb 2b1100 552200 803300 aa4400 d45500 ff6600 ff7f2a ff9955 ffb380 ffccaa ffe6d5 28170b 502d16 784421 a05a2c c87137 d38d5f deaa87 e9c6af f4e3d7';
define('ink-palette', `:host{height:36px}.m{width:1392px;flex:none}.c{display:flex;height:17px;overflow:hidden}.c i{width:19px;flex:none}.s{height:18px;background:#eeedec;border-top:1px solid #d3cfcb;padding-top:3px}.s div{width:231px;height:10px;border-radius:5px;background:#cecece}.e{height:1px;background:#cdc9c6}`,
 `<div class="m"><div class="c"><ink-icon n="nocolor"></ink-icon>${PALETTE.split(' ').map(c => `<i style="background:#${c}"></i>`).join('')}</div><div class="s"><div></div></div><div class="e"></div></div><ink-icon n="triL" style="margin:11px 0 0 12px"></ink-icon>`);
define('ink-taskbar', `:host{height:6px}div{height:6px}`, `<div style="width:286px;background:#f0f0f0;border-top:1px solid #c8c8c8"></div><div style="width:124px;background:#434241"></div><div style="width:61px;background:#434241;border:solid #fff;border-width:3px 3px 0"></div><div style="width:311px;background:#434241"></div><div style="width:61px;background:#6a6968"></div><div style="flex:1;background:#434241"></div>`);
define('ink-app', `:host{flex-direction:column;width:1425px;height:1029px;background:#f6f5f4}.w{display:flex;height:882px;flex:none;overflow:hidden}`,
 `<ink-titlebar></ink-titlebar><ink-menubar></ink-menubar><ink-toolbar></ink-toolbar><div class="w"><ink-toolbox></ink-toolbox><ink-canvas></ink-canvas><div style="width:1px;background:#d6d0cb;flex:none"></div><ink-docks></ink-docks><ink-commands></ink-commands><ink-snapbar></ink-snapbar></div><ink-palette></ink-palette><ink-taskbar></ink-taskbar>`);
</script>
</body>
</html>
